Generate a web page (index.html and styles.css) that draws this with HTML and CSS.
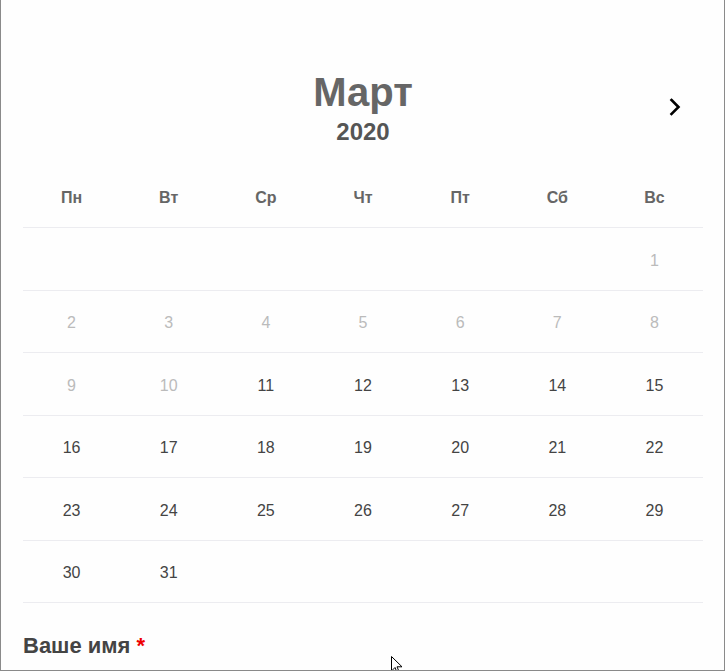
FILE: index.html
```html
<!DOCTYPE html>
<html lang="ru">
<head>
<meta charset="utf-8">
<link rel="stylesheet" href="styles.css">
</head>
<body>
<div class="frame">
  <div class="cal-head">
    <div class="month">Март</div>
    <div class="year">2020</div>
    <button class="next" aria-label="next">
      <svg width="14" height="20" viewBox="0 0 14 20"><path d="M3.5 3 L10.5 10 L3.5 17" fill="none" stroke="#000" stroke-width="2.6" stroke-linecap="square"/></svg>
    </button>
  </div>
  <div class="grid">
    <div class="wd">Пн</div><div class="wd">Вт</div><div class="wd">Ср</div><div class="wd">Чт</div><div class="wd">Пт</div><div class="wd">Сб</div><div class="wd">Вс</div>
    <div class="d"></div><div class="d"></div><div class="d"></div><div class="d"></div><div class="d"></div><div class="d"></div><div class="d off">1</div>
    <div class="d off">2</div><div class="d off">3</div><div class="d off">4</div><div class="d off">5</div><div class="d off">6</div><div class="d off">7</div><div class="d off">8</div>
    <div class="d off">9</div><div class="d off">10</div><div class="d">11</div><div class="d">12</div><div class="d">13</div><div class="d">14</div><div class="d">15</div>
    <div class="d">16</div><div class="d">17</div><div class="d">18</div><div class="d">19</div><div class="d">20</div><div class="d">21</div><div class="d">22</div>
    <div class="d">23</div><div class="d">24</div><div class="d">25</div><div class="d">26</div><div class="d">27</div><div class="d">28</div><div class="d">29</div>
    <div class="d">30</div><div class="d">31</div><div class="d"></div><div class="d"></div><div class="d"></div><div class="d"></div><div class="d"></div>
  </div>
  <div class="label">Ваше имя <span class="req">*</span></div>
  <svg class="cursor" width="14" height="20" viewBox="0 0 14 20"><path d="M0.5 0.5 L0.5 15 L4 11.5 L6.5 17.5 L8.5 16.5 L6 10.8 L11 10.8 Z" fill="#fff" stroke="#000" stroke-width="1"/></svg>
</div>
</body>
</html>
```
FILE: styles.css
```css
html, body {
  margin: 0;
  padding: 0;
  background: #fff;
}
body {
  font-family: "Liberation Sans", Arial, sans-serif;
}
.frame {
  position: relative;
  box-sizing: border-box;
  width: 725px;
  height: 671px;
  border-left: 1px solid #8a8a8a;
  border-right: 1px solid #8a8a8a;
  border-bottom: 1px solid #8a8a8a;
  padding: 0 21px 0 22px;
  overflow: hidden;
  background: #fefefe;
}
.cal-head {
  position: relative;
  height: 166px;
  box-sizing: border-box;
  padding-top: 68px;
  text-align: center;
}
.month {
  font-size: 40px;
  line-height: 48px;
  font-weight: bold;
  color: #666;
}
.year {
  margin-top: 2px;
  font-size: 24px;
  line-height: 28px;
  font-weight: bold;
  color: #555;
}
.next {
  position: absolute;
  right: 18px;
  top: 97px;
  width: 20px;
  height: 20px;
  padding: 0;
  border: 0;
  background: none;
  display: flex;
  align-items: center;
  justify-content: center;
}
.grid {
  display: grid;
  grid-template-columns: repeat(7, 1fr);
}
.wd, .d {
  box-sizing: border-box;
  border-bottom: 1px solid #ececf0;
  display: flex;
  align-items: center;
  justify-content: center;
  font-size: 16px;
}
.wd {
  height: 62px;
  padding-top: 3px;
  font-weight: bold;
  color: #666;
}
.d {
  height: 62.5px;
  padding-top: 4px;
  color: #444;
}
.d.off {
  color: #bbb;
}
.label {
  margin-top: 30px;
  font-size: 22px;
  line-height: 26px;
  font-weight: bold;
  color: #444;
}
.req {
  color: #e00;
}
.cursor {
  position: absolute;
  left: 390px;
  top: 656px;
}
```
